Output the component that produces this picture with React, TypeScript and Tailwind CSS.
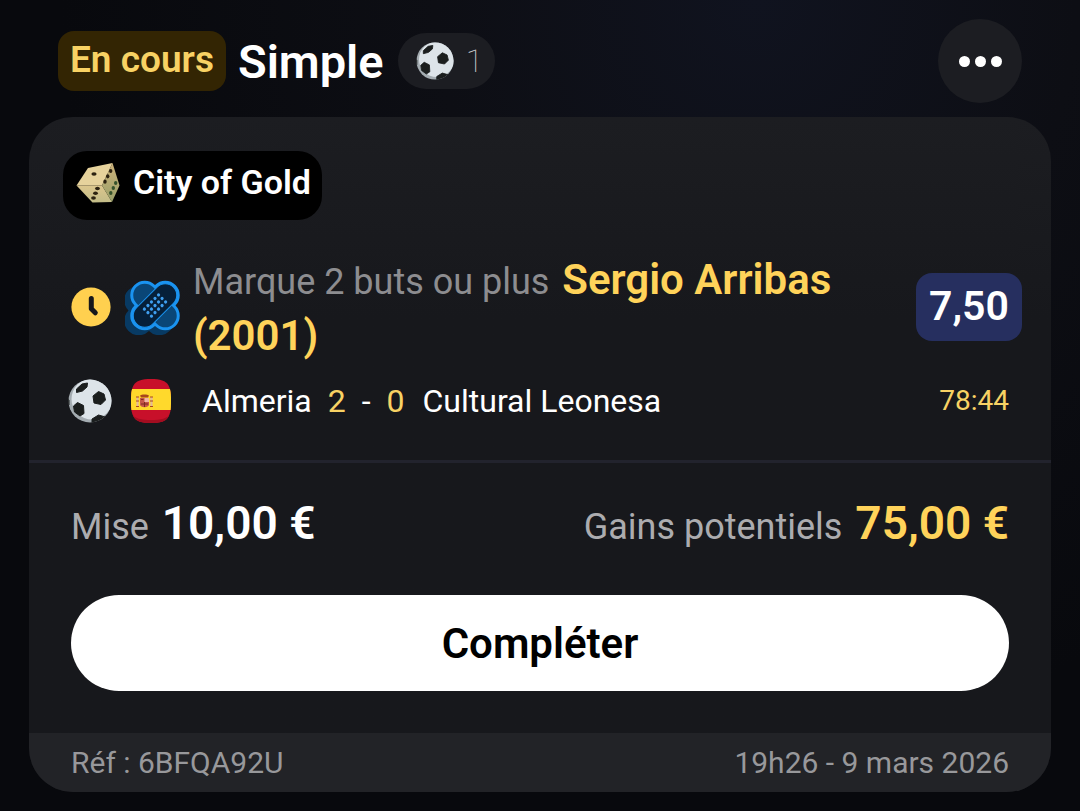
import React from "react";

const SoccerBall: React.FC<{ className?: string }> = ({ className }) => (
  <svg viewBox="0 0 44 44" className={className} aria-hidden="true">
    <defs>
      <clipPath id="ball">
        <circle cx="22" cy="22" r="21.5" />
      </clipPath>
    </defs>
    <g clipPath="url(#ball)">
      <rect width="44" height="44" fill="#a4acb1" />
      <circle cx="24" cy="20" r="20.5" fill="#dde4e9" />
      <g fill="#1b1e1e" stroke="#1b1e1e" strokeWidth="1" strokeLinejoin="round">
        <path d="M8.500 10 14 5 19.500 4 19 8 14.500 12 8.500 13.500z" />
        <path d="M25 17 30.500 12.500 36 15 37.500 21 33 25.500 26 24z" />
        <path d="M5.500 27 9.500 23.500 15.500 26.500 16 34.500 12 37 6.500 33z" />
        <path d="M24 40 30.500 36 37.500 38 34 43 24 44z" />
        <path d="M0 20 1 21.500V26L0 27z" />
      </g>
    </g>
  </svg>
);

const SpainFlag: React.FC = () => (
  <svg viewBox="0 0 42 46" className="h-[46px] w-[42px]" aria-hidden="true">
    <defs>
      <clipPath id="flag">
        <path d="M21 1c9 0 15 1.500 17.500 6.500S41 16 41 23s0 10.500-2.500 15.500S30 45 21 45 6 43.500 3.500 38.500 1 30 1 23s0-10.500 2.500-15.500S12 1 21 1z" />
      </clipPath>
    </defs>
    <g clipPath="url(#flag)">
      <rect width="42" height="46" fill="#c8102a" />
      <path d="M1 35c4 6 10 7 20 7s16-1 20-7v11H1z" fill="#a30d20" />
      <rect y="11" width="42" height="21" fill="#ffd92c" />
    </g>
    <path d="M10 17.500c1-1.500 8-1.500 9 0l-1 2h-7z" fill="#a8471c" />
    <path d="M10 20h9v6.500c0 3.500-9 3.500-9 0z" fill="#c5564a" />
    <path d="M14.500 20h4.500v4h-4.500z" fill="#f0b7a5" />
    <path d="M11 21.500h2.500M11 26h7M14.500 24v5" stroke="#7f2b20" strokeWidth="1" />
    <path d="M7.500 19v10M21.500 19v10" stroke="#e3b79b" strokeWidth="2" />
    <path d="M6 23h3M6 28.500h3M20 23h3M20 28.500h3M6 19h3M20 19h3" stroke="#a8471c" strokeWidth="1" />
  </svg>
);

const ClockIcon: React.FC = () => (
  <svg viewBox="0 0 40 40" className="size-10 shrink-0" aria-hidden="true">
    <circle cx="20" cy="20" r="19.600" fill="#ffd04f" />
    <path
      d="M20.300 11.500v10.300l4 4"
      fill="none"
      stroke="#16171b"
      strokeWidth="5"
      strokeLinecap="round"
      strokeLinejoin="round"
    />
  </svg>
);

const BandageIcon: React.FC = () => (
  <svg viewBox="0 0 56 56" className="size-14 shrink-0" aria-hidden="true">
    {/* shadow */}
    <g fill="#083a63" transform="translate(-6 5)">
      <rect x="1" y="12" width="58" height="29" rx="14.500" transform="rotate(45 30 26.500)" />
      <rect x="1" y="12" width="58" height="29" rx="14.500" transform="rotate(-45 30 26.500)" />
    </g>
    {/* shared outline, then the two strips */}
    <g fill="#1a93f0">
      <rect x="1" y="12" width="58" height="29" rx="14.500" transform="rotate(45 30 26.500)" />
      <rect x="1" y="12" width="58" height="29" rx="14.500" transform="rotate(-45 30 26.500)" />
    </g>
    <rect x="4" y="15" width="52" height="23" rx="11.500" transform="rotate(45 30 26.500)" fill="#0a4677" />
    <rect
      x="4" y="15" width="52" height="23" rx="11.500"
      transform="rotate(-45 30 26.500)"
      fill="#06203a" stroke="#1a93f0" strokeWidth="1"
    />
    <g transform="rotate(-45 30 26.500)" fill="#3f9ff0">
      {[20, 25, 30, 35, 40].map((x) =>
        [21.5, 26.5, 31.5].map((y) => <circle key={`${x}-${y}`} cx={x} cy={y} r="1.600" />)
      )}
    </g>
  </svg>
);

const DiceIcon: React.FC = () => (
  <svg viewBox="0 0 46 44" className="h-11 w-[46px] shrink-0" aria-hidden="true">
    <defs>
      <linearGradient id="front" x1="0" y1="0" x2="0" y2="1">
        <stop offset="0" stopColor="#dcc68d" />
        <stop offset="1" stopColor="#c2bc88" />
      </linearGradient>
      <linearGradient id="side" x1="0" y1="0" x2="0" y2="1">
        <stop offset="0" stopColor="#cdb27a" />
        <stop offset="1" stopColor="#99a06a" />
      </linearGradient>
    </defs>
    <path d="M13 7 37.500 2 27 24.500 1.500 24.500z" fill="#e6d29c" />
    <path d="M1.500 24.500H27L37 41l-19.500.5z" fill="url(#front)" />
    <path d="M37.500 2 44.500 24.500 37 41 27 24.500z" fill="url(#side)" />
    <g fill="#2c2211">
      <ellipse cx="19" cy="13" rx="2.600" ry="1.700" />
      <ellipse cx="22.500" cy="27.500" rx="2.400" ry="1.800" />
      <ellipse cx="20.500" cy="32.300" rx="2.400" ry="1.800" />
      <ellipse cx="18.500" cy="37" rx="2.400" ry="1.800" />
      <ellipse cx="35.700" cy="10" rx="1.700" ry="2.100" />
      <ellipse cx="32.700" cy="15.300" rx="1.700" ry="2.100" />
      <ellipse cx="30" cy="20.700" rx="1.700" ry="2.100" />
    </g>
    <g fill="#35512b">
      <ellipse cx="40.700" cy="22" rx="1.700" ry="2.100" />
      <ellipse cx="38.300" cy="27" rx="1.700" ry="2.100" />
      <ellipse cx="35.800" cy="32" rx="1.700" ry="2.100" />
    </g>
  </svg>
);

const BetHeader: React.FC = () => (
  <header className="flex items-center pt-[19px] pr-[58px] pl-[58px]">
    <span className="flex h-[60px] items-center rounded-2xl bg-[#332503] px-3 pb-0.5 text-[37px] font-semibold text-[#f8d264]">
      En cours
    </span>
    <h1 className="ml-3 text-[47px] leading-none font-semibold text-white">Simple</h1>
    <span className="ml-3.5 flex h-14 items-center gap-3 rounded-full bg-[#1c1d22] pr-3 pl-[18px] text-[32px] font-thin text-[#d0d0d4]">
      <SoccerBall className="size-[38px]" />
      1
    </span>
    <button
      type="button"
      aria-label="Options"
      className="ml-auto flex size-[84px] items-center justify-center gap-[5px] rounded-full bg-[#1c1d22]"
    >
      <span className="size-[11px] rounded-full bg-white" />
      <span className="size-[11px] rounded-full bg-white" />
      <span className="size-[11px] rounded-full bg-white" />
    </button>
  </header>
);

const Selection: React.FC = () => (
  <section className="px-[42px] pb-9">
    <div className="-mr-[13px] flex items-center">
      <div className="flex items-center gap-3.5 pb-1.5">
        <ClockIcon />
        <BandageIcon />
      </div>
      <p className="mr-4 ml-3 flex-1 text-[36px] leading-14 text-[#8d8d90]">
        Marque 2 buts ou plus{" "}
        <strong className="ml-1 text-[42px] leading-none font-semibold text-[#ffd35a]">
          Sergio Arribas (2001)
        </strong>
      </p>
      <span className="mb-1.5 flex h-[68px] w-[106px] items-center justify-center rounded-2xl bg-[#262f5f] text-[41px] font-semibold text-white">
        7,50
      </span>
    </div>
    <div className="-ml-[3px] flex items-center pt-3 text-[32px] leading-[46px] text-white">
      <SoccerBall className="size-11" />
      <span className="ml-[18px]">
        <SpainFlag />
      </span>
      <span className="ml-[30px]">Almeria</span>
      <span className="ml-4 text-[#f8d264]">2</span>
      <span className="mx-4">-</span>
      <span className="text-[#f8d264]">0</span>
      <span className="ml-[18px]">Cultural Leonesa</span>
      <time className="ml-auto text-[28px] text-[#f8d264]">78:44</time>
    </div>
  </section>
);

const App: React.FC = () => {
  return (
    <div className="min-h-screen bg-[#08090d] bg-[radial-gradient(ellipse_at_70%_0%,#10131f_0%,#0d0e14_30%,#08090d_65%)] pb-[19px] font-['Roboto',sans-serif]">
      <BetHeader />
      <main className="mx-[29px] mt-3.5 overflow-hidden rounded-[44px] bg-[#17181c] bg-linear-to-b from-[#1c1d21] to-[#17181c] to-30%">
        <div className="px-[34px] pt-[34px] pb-[34px]">
          <div className="inline-flex h-[69px] items-center gap-3 rounded-3xl bg-black pr-[11px] pb-1.5 pl-3 text-[34px] font-semibold text-white">
            <DiceIcon />
            City of Gold
          </div>
        </div>
        <Selection />
        <div className="border-t-3 border-[#22232d] px-[42px] pt-9 pb-[42px]">
          <div className="flex items-baseline justify-between text-[36px] leading-14 text-[#acacaf]">
            <p>
              Mise <strong className="ml-1 text-[46px] leading-none font-semibold text-white">10,00 €</strong>
            </p>
            <p>
              Gains potentiels{" "}
              <strong className="ml-1 text-[46px] leading-none font-semibold text-[#ffd35a]">75,00 €</strong>
            </p>
          </div>
          <button
            type="button"
            className="mt-10 h-24 w-full rounded-full bg-white text-[42px] font-semibold text-black"
          >
            Compléter
          </button>
        </div>
        <footer className="flex h-[59px] items-center justify-between bg-[#222327] px-[42px] text-[30px] text-[#98989b]">
          <span>Réf : 6BFQA92U</span>
          <time>19h26 - 9 mars 2026</time>
        </footer>
      </main>
    </div>
  );
};

export default App;
